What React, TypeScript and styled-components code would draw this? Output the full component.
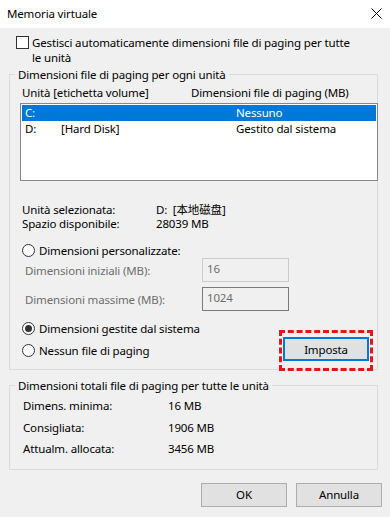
import styled, { createGlobalStyle } from 'styled-components'

const GlobalStyle = createGlobalStyle`
  html, body {
    margin: 0;
    padding: 0;
    background: #f0f0f0;
  }
  body {
    font-family: "Noto Sans", "Noto Sans CJK SC", sans-serif;
    font-size: 11.5px;
    letter-spacing: -0.15px;
    color: #000;
  }
`

const Window = styled.div`
  width: 390px;
  height: 517px;
  background: #f0f0f0;
  display: flex;
  flex-direction: column;
  overflow: hidden;
`

const TitleBar = styled.div`
  height: 28px;
  box-sizing: border-box;
  background: #fff;
  display: flex;
  align-items: center;
  justify-content: space-between;
  padding: 0 8px 1px 7px;
  line-height: 15px;
`

const Body = styled.div`
  display: flex;
  flex-direction: column;
  padding: 0 8px 0 9px;
`

const CheckRow = styled.label`
  display: flex;
  align-items: flex-start;
  gap: 3px;
  margin: 7px 0 0 7px;
  line-height: 15px;
`

const CheckBox = styled.span`
  flex: none;
  width: 13px;
  height: 13px;
  box-sizing: border-box;
  border: 1px solid #333;
  background: #fff;
  margin-top: 1px;
`

const Group = styled.fieldset<{ $top: number }>`
  margin: ${p => p.$top}px 4px 0 0;
  padding: 0;
  border: 1px solid #dcdcdc;
  min-width: 0;
`

const Legend = styled.legend`
  margin-left: 5px;
  padding: 0 3px;
  line-height: 15px;
`

const GroupInner = styled.div<{ $pad: string }>`
  display: flex;
  flex-direction: column;
  padding: ${p => p.$pad};
`

const HeaderRow = styled.div`
  display: grid;
  grid-template-columns: 169px 1fr;
  padding: 3px 0 0 2px;
  line-height: 15px;
`

const ListBox = styled.div`
  margin-top: 3px;
  height: 78px;
  box-sizing: border-box;
  border: 1px solid #828790;
  background: #fff;
  padding: 1px;
  margin-right: -1px;
`

const ListRow = styled.div<{ $selected?: boolean }>`
  display: grid;
  grid-template-columns: 36px 175px 1fr;
  height: 16px;
  line-height: 16px;
  padding-left: 3px;
  background: ${p => (p.$selected ? '#0078d7' : 'transparent')};
  color: ${p => (p.$selected ? '#fff' : '#000')};
`

const InfoGrid = styled.div`
  display: grid;
  grid-template-columns: 134px 1fr;
  margin: 22px 0 0 2px;
  line-height: 14px;
`

const RadioRow = styled.label<{ $top: number }>`
  display: flex;
  align-items: center;
  gap: 4px;
  margin: ${p => p.$top}px 0 0 2px;
  line-height: 15px;
`

const Radio = styled.span<{ $checked?: boolean }>`
  flex: none;
  width: 13px;
  height: 13px;
  box-sizing: border-box;
  border: 1px solid #333;
  border-radius: 50%;
  background: #fff;
  display: flex;
  align-items: center;
  justify-content: center;
  &::after {
    content: '';
    width: 7px;
    height: 7px;
    border-radius: 50%;
    background: ${p => (p.$checked ? '#333' : 'transparent')};
  }
`

const FieldRow = styled.div<{ $top: number }>`
  display: grid;
  grid-template-columns: 177px 87px;
  align-items: center;
  margin: ${p => p.$top}px 0 0 5px;
  color: #6d6d6d;
`

const NumberBox = styled.div<{ $dark?: boolean }>`
  height: 24px;
  box-sizing: border-box;
  border: 1px solid ${p => (p.$dark ? '#7a7a7a' : '#cccccc')};
  background: #f0f0f0;
  padding: 2px 0 0 4px;
  line-height: 15px;
  color: #6d6d6d;
`

const BottomRow = styled.div`
  display: flex;
  align-items: center;
  justify-content: space-between;
  margin-top: 7px;
`

const Highlight = styled.div`
  margin: -13px 4px -13px 0;
  border: 3px dashed #e8141b;
  padding: 4px 1px 7px 1px;
`

const Button = styled.button<{ $focused?: boolean }>`
  width: 86px;
  height: 24px;
  box-sizing: border-box;
  margin: 0;
  padding: 0;
  font: inherit;
  letter-spacing: inherit;
  color: #000;
  background: #e1e1e1;
  border: ${p => (p.$focused ? '2px solid #0078d7' : '1px solid #adadad')};
  display: block;
`

const TotalsGrid = styled.div`
  display: grid;
  grid-template-columns: 145px 1fr;
  padding: 2px 0 9px 13px;
  line-height: 21.5px;
`

const Footer = styled.div`
  display: flex;
  justify-content: flex-end;
  gap: 9px;
  margin-top: 13px;
`

const CloseIcon = () => (
  <svg width="11" height="11" viewBox="0 0 11 11">
    <path d="M0.5 0.5 L10.5 10.5 M10.5 0.5 L0.5 10.5" stroke="#000" strokeWidth="1" />
  </svg>
)

export default function App() {
  return (
    <Window>
      <GlobalStyle />
      <TitleBar>
        <span>Memoria virtuale</span>
        <CloseIcon />
      </TitleBar>
      <Body>
        <CheckRow>
          <CheckBox />
          <span>
            Gestisci automaticamente dimensioni file di paging per tutte
            <br />
            le unità
          </span>
        </CheckRow>

        <Group $top={2}>
          <Legend>Dimensioni file di paging per ogni unità</Legend>
          <GroupInner $pad="0 0 11px 10px">
            <HeaderRow>
              <span>Unità [etichetta volume]</span>
              <span>Dimensioni file di paging (MB)</span>
            </HeaderRow>
            <ListBox>
              <ListRow $selected>
                <span>C:</span>
                <span />
                <span>Nessuno</span>
              </ListRow>
              <ListRow>
                <span>D:</span>
                <span>[Hard Disk]</span>
                <span>Gestito dal sistema</span>
              </ListRow>
            </ListBox>

            <InfoGrid>
              <span>Unità selezionata:</span>
              <span>D:&nbsp; [本地磁盘]</span>
              <span>Spazio disponibile:</span>
              <span>28039 MB</span>
            </InfoGrid>

            <RadioRow $top={12}>
              <Radio />
              <span>Dimensioni personalizzate:</span>
            </RadioRow>
            <FieldRow $top={0}>
              <span>Dimensioni iniziali (MB):</span>
              <NumberBox>16</NumberBox>
            </FieldRow>
            <FieldRow $top={5}>
              <span>Dimensioni massime (MB):</span>
              <NumberBox $dark>1024</NumberBox>
            </FieldRow>

            <RadioRow $top={10}>
              <Radio $checked />
              <span>Dimensioni gestite dal sistema</span>
            </RadioRow>
            <BottomRow>
              <RadioRow $top={0}>
                <Radio />
                <span>Nessun file di paging</span>
              </RadioRow>
              <Highlight>
                <Button $focused>Imposta</Button>
              </Highlight>
            </BottomRow>
          </GroupInner>
        </Group>

        <Group $top={8}>
          <Legend>Dimensioni totali file di paging per tutte le unità</Legend>
          <TotalsGrid>
            <span>Dimens. minima:</span>
            <span>16 MB</span>
            <span>Consigliata:</span>
            <span>1906 MB</span>
            <span>Attualm. allocata:</span>
            <span>3456 MB</span>
          </TotalsGrid>
        </Group>

        <Footer>
          <Button>OK</Button>
          <Button>Annulla</Button>
        </Footer>
      </Body>
    </Window>
  )
}
